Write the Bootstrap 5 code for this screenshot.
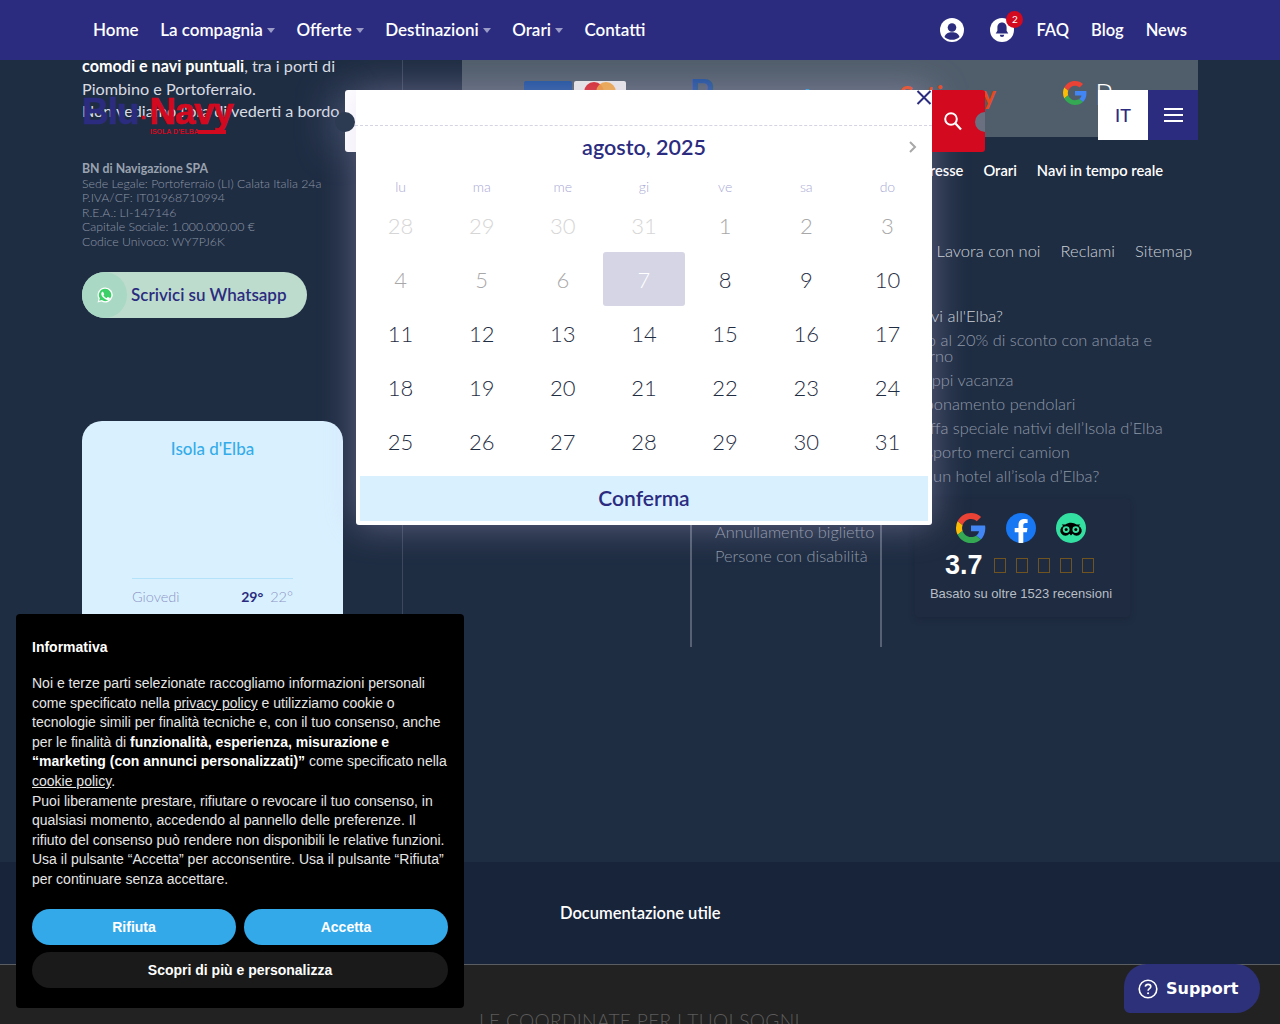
<!DOCTYPE html>
<html lang="it">
<head>
<meta charset="utf-8">
<title>Blu Navy</title>
<link href="https://cdn.jsdelivr.net/npm/bootstrap@5.3.0/dist/css/bootstrap.min.css" rel="stylesheet">
<style>
html,body{height:1024px;overflow:hidden}
body{background:#1f2d43;font-family:"Lato","Noto Sans",sans-serif;color:#fff;position:relative}
a{text-decoration:none;color:inherit}
.topnav{top:0;left:0;width:1280px;height:60px;background:#2b2c7f;padding:0 93px;z-index:20;font-size:16.5px;font-weight:600}
.topnav .gp{gap:22px}
.topnav .lgrp{font-size:17px;gap:21.5px}
.caret{display:inline-block;width:0;height:0;border:4.5px solid transparent;border-top:5px solid #9a9bc7;border-bottom:0;margin-left:4px;vertical-align:3px}
.iconbtn{width:24px;height:24px;display:block}
.bellwrap{position:relative;width:24px;height:24px;margin-left:4px}
.bellbadge{position:absolute;left:16px;top:-7px;width:17px;height:17px;border-radius:50%;background:#d2091f;font-size:10px;line-height:17px;text-align:center;color:#fff;font-weight:400}
.stage{padding:55px 82px 0;height:862px}
.leftcol{width:321px;height:752px;border-right:1px solid #3c495d;flex:none}
.intro{font-size:16.2px;line-height:22.5px;width:270px;font-weight:400;color:#d8dce2}
.intro b{color:#fff;font-weight:700}
.company{margin-top:39.5px;font-size:12.3px;line-height:14.5px;color:#8c96a4;font-weight:300}
.company b{font-weight:700;color:#9aa3af}
.wapill{margin-top:22.5px;width:225px;height:46px;background:#bedccd;border-radius:23px;color:#2b2c7f;font-size:17px;font-weight:600;gap:4px}
.wacirc{width:45px;height:46px;border-radius:23px;background:#a9d9c4;flex:none}
.wxcard{margin-top:103px;width:261px;height:300px;background:#d9f1ff;border-radius:20px 20px 0 0;padding:18px 50px 0;color:#8f93c4}
.wxcard h6{color:#35ace9;font-size:17px;font-weight:500;text-align:center;margin:0;line-height:20px;height:139px}
.wxrow{border-top:1px solid #b5e2fb;padding-top:8px;font-size:14.5px;font-weight:300;line-height:20px}
.wxrow b{color:#2b2c7f;font-weight:700;font-size:14px;margin-right:3px}
.rightcol{margin-left:59px;width:736px;flex:none}
.payband{height:82px;background:#505d6b;padding:26px 0 0 62px;gap:1px;overflow:hidden;align-items:flex-start}
.cardlogo{width:48px;height:30px;border-radius:2px;background:#1a4f9c;flex:none}
.mclogo{width:52px;background:#e8e8e8;margin-left:1px}
.ppal{margin-left:63px;color:#1d4f9a;font-size:26px;font-weight:700;line-height:28px;width:150px;font-family:"Liberation Sans",sans-serif;flex:none;white-space:nowrap}
.ppal b{font-size:36px;line-height:24px;margin-right:12px;vertical-align:top}
.ppal i{font-style:normal;vertical-align:top;line-height:28px;margin-top:4px;display:inline-block}
.ppal u{text-decoration:none;color:#2aa0dc}
.scala{margin-left:41px;color:#e8491d;font-size:26px;line-height:26px;font-weight:700;flex:none;width:114px;text-align:right;margin-top:1px}
.gpay{margin-left:66px;gap:8px;font-size:30px;font-weight:300;line-height:24px;color:#fff;flex:none}
.row2{gap:20px;justify-content:flex-end;padding-right:35px;margin-top:23px;font-size:14.7px;font-weight:600;line-height:20px}
.row3{gap:20px;justify-content:flex-end;padding-right:6px;margin-top:59px;font-size:16.5px;font-weight:300;line-height:24px;color:#ccd1d8}
.cols3{margin-top:27px;height:357px;display:grid;grid-template-columns:228px 190px 318px}
.colb{border-left:2px solid #566274;padding-left:22px}
.colb ul{font-size:16.4px;line-height:16px;font-weight:300;color:#8e98a6;margin:0;padding:0;list-style:none}
.colb li{margin-bottom:8px}
.c2{padding-top:234px;padding-left:23px}
.c3{padding-top:16px;padding-left:23px}
.c3 h6{font-size:16.5px;line-height:20px;font-weight:300;color:#ccd1d8;margin:0 0 6px}
.revbox{margin:15px 0 0 10px;width:215px;height:118px;background:#1e2b40;box-shadow:0 2px 6px rgba(15,22,35,.3);padding:14px 0 0;text-align:center;border-radius:3px}
.revicons{gap:20px;justify-content:center;padding-right:3px}
.revicons svg{width:30px;height:30px;display:block}
.revscore{font-family:"Liberation Sans",sans-serif;font-weight:700;font-size:27px;line-height:32px;gap:11px;padding-left:30px;margin-top:6px}
.tofu{display:inline-block;width:12px;height:15px;border:1px solid #6f5422;margin-right:10.2px}
.revtxt{font-family:"Liberation Sans",sans-serif;font-size:13px;line-height:16px;color:#b8bec6;margin-top:5px;padding-right:3px}
.docband{height:103px;background:#18243a;border-bottom:1px solid #5a5d62;font-size:16.5px;font-weight:600;padding-left:560px;line-height:102px}
.btmband{height:59px;background:#222;color:#5b5b5b;font-size:19.2px;font-weight:300;padding:44px 0 0 479px;line-height:24px;letter-spacing:.3px;overflow:hidden;white-space:nowrap}
.logo{left:82px;top:94px;width:160px;height:44px;z-index:6;font-family:"Liberation Sans",sans-serif;font-weight:700;line-height:36px;font-size:37px;-webkit-text-stroke:.6px currentColor}
.logo .bl{color:#2b2c7f;letter-spacing:-1px}
.logo .dt{color:#d2091f;font-size:20px;margin:0 2px}
.logo .nv{color:#d2091f;letter-spacing:-1.3px}
.logosub{left:68px;top:34px;font-size:7px;line-height:8px;color:#d2091f;-webkit-text-stroke:0;white-space:nowrap}
.logotail{left:116px;top:36px;width:28px;height:4px;background:#d2091f}
.corner{left:1098px;top:90px;z-index:12}
.ibox{width:50px;height:50px;background:#fff;color:#2b2c7f;font-size:18px;font-weight:500}
.mbox{width:50px;height:50px;background:#2b2c7f}
.mbox i{display:block;width:19px;height:2px;background:#fff;margin:2px 0}
.modalw{left:345px;top:90px;width:587px;height:435px;z-index:10}
.stub{left:0;top:0;width:12px;height:62px;background:#fff;border-radius:3px 0 0 3px;box-shadow:-12px 0 36px rgba(170,175,230,.38)}
.mbody{margin-left:11px;width:576px;height:435px;background:#fff;padding:41px 4px 4px;border-radius:0 0 3px 3px;box-shadow:0 0 36px rgba(205,190,235,.38);position:relative}
.notchl{left:-10px;top:22px;width:20px;height:20px;border-radius:50%;background:#2c3a52}
.dash{left:10px;right:0;top:35px;border-top:1px dashed #d4d4e2}
.xclose{right:0;top:0;width:16px;height:15px}
.mtitle{height:32px;line-height:32px;text-align:center;color:#2b2c7f;font-size:21.5px;font-weight:600;position:relative}
.chev{position:absolute;right:11px;top:9px;width:9px;height:14px}
.calgrid{display:grid;grid-template-columns:repeat(7,1fr);margin-top:11px;text-align:center}
.dname{height:24px;line-height:26px;font-size:14px;color:#a9a9d4;font-weight:300}
.dday{height:54px;line-height:55px;font-size:22px;font-weight:300;color:#1f2d43}
.dday.old{color:#d6d6d6}
.dday.dim{color:#a8a8a8}
.dday.sel{background:#d5d5e5;color:#fff;border-radius:3px}
.confirmb{margin-top:8px;height:45px;line-height:43px;background:#d9f1ff;color:#2b2c7f;font-size:21px;font-weight:600;text-align:center}
.srch{left:587px;top:0;width:53px;height:62px;background:#d2091f;border-radius:0 3px 3px 0;overflow:hidden}
.srch svg{position:absolute;left:11px;top:21px;width:20px;height:20px}
.notchr{left:43px;top:22px;width:20px;height:20px;border-radius:50%;background:#6b7080}
.cookiebox{left:16px;top:614px;width:448px;height:394px;background:#000;border-radius:4px;padding:24px 16px 0;z-index:15;font-family:"Liberation Sans",sans-serif;font-size:14px;line-height:19.6px;color:#e6e6e6}
.cookiebox h6{font-size:14px;line-height:19.6px;font-weight:700;color:#fff;margin:0 0 16.4px}
.cookiebox p{margin:0}
.cookiebox p b{color:#fff}
.cookiebox p a{text-decoration:underline}
.ckgrid{margin-top:19.6px;display:grid;grid-template-columns:1fr 1fr;gap:7px 8px}
.ckbtn{height:36px;padding:0;border:0;font-size:14px;font-weight:700;color:#fff;background:#33a9ea;border-radius:18px;line-height:36px;font-family:"Liberation Sans",sans-serif}
.ckbtn:hover{background:#33a9ea;color:#fff}
.ckalt{grid-column:1 / 3;background:#1a1a1a}
.ckalt:hover{background:#1a1a1a}
.supp{left:1124px;top:964px;width:136px;height:49px;background:#2d3179;border-radius:24px 26px 26px 6px;z-index:16;font-family:"DejaVu Sans",sans-serif;font-weight:700;font-size:16px;gap:8px;padding-left:14px}
.supp svg{width:20px;height:20px;flex:none}
</style>
</head>
<body>

<nav class="topnav position-fixed d-flex align-items-center justify-content-between">
  <div class="d-flex align-items-center lgrp">
    <a href="#">Home</a>
    <a href="#">La compagnia<span class="caret"></span></a>
    <a href="#">Offerte<span class="caret"></span></a>
    <a href="#">Destinazioni<span class="caret"></span></a>
    <a href="#">Orari<span class="caret"></span></a>
    <a href="#">Contatti</a>
  </div>
  <div class="d-flex align-items-center gp">
    <svg class="iconbtn" viewBox="0 0 24 24"><circle cx="12" cy="12" r="12" fill="#fff"/><circle cx="12" cy="9.500" r="4.300" fill="#2b2c7f"/><path d="M4.500 19c1-3.400 4-4.800 7.500-4.800s6.500 1.400 7.500 4.800c-2 1.900-4.600 2.800-7.500 2.800s-5.500-.9-7.500-2.800z" fill="#2b2c7f"/></svg>
    <div class="bellwrap">
      <svg class="iconbtn" viewBox="0 0 24 24"><circle cx="12" cy="12" r="12" fill="#fff"/><path d="M12 4.500c-3 0-4.600 2.300-4.600 5v3.200l-1.700 2.800h12.600l-1.700-2.800V9.500c0-2.700-1.600-5-4.600-5z" fill="#2b2c7f"/><path d="M9.800 16.800h4.400a2.200 2.200 0 0 1-4.400 0z" fill="#2b2c7f"/></svg>
      <span class="bellbadge">2</span>
    </div>
    <a href="#">FAQ</a>
    <a href="#">Blog</a>
    <a href="#">News</a>
  </div>
</nav>

<div class="stage d-flex">
  <div class="leftcol">
    <div class="intro"><b>comodi e navi puntuali</b>, tra i porti di Piombino e Portoferraio.<br>Non vediamo l'ora di vederti a bordo.</div>
    <div class="company"><b>BN di Navigazione SPA</b><br>Sede Legale: Portoferraio (LI) Calata Italia 24a<br>P.IVA/CF: IT01968710994<br>R.E.A.: LI-147146<br>Capitale Sociale: 1.000.000,00 €<br>Codice Univoco: WY7PJ6K</div>
    <a href="#" class="wapill d-flex align-items-center">
      <span class="wacirc d-flex align-items-center justify-content-center">
        <svg width="18" height="18" viewBox="0 0 24 24"><path d="M12 2a10 10 0 0 0-8.600 15L2 22l5.200-1.400A10 10 0 1 0 12 2z" fill="#fff"/><path d="M12 3.800a8.200 8.200 0 0 0-6.900 12.600l-.9 3.300 3.400-.9A8.200 8.200 0 1 0 12 3.800z" fill="#3dd068"/><path d="M9 7.500c-.3 0-.7.100-1 .5-.4.500-1 1.200-1 2.600s1 2.800 1.200 3c.1.200 2 3.100 4.900 4.300 2.400 1 2.900.8 3.400.7.500 0 1.700-.7 1.900-1.300.2-.7.200-1.200.2-1.300-.1-.1-.3-.2-.6-.4l-1.900-.9c-.3-.1-.5-.1-.7.100l-.9 1.100c-.1.200-.3.200-.6.100-.3-.2-1.200-.5-2.300-1.400-.8-.8-1.400-1.700-1.600-2-.1-.3 0-.4.100-.6l.7-.8c.1-.2.100-.4 0-.6L9.600 8c-.2-.5-.4-.5-.6-.5z" fill="#fff"/></svg>
      </span>
      <span>Scrivici su Whatsapp</span>
    </a>
    <div class="wxcard">
      <h6>Isola d'Elba</h6>
      <div class="wxrow d-flex justify-content-between"><span>Giovedì</span><span><b>29°</b> 22°</span></div>
    </div>
  </div>

  <div class="rightcol">
    <div class="payband d-flex">
      <div class="cardlogo"></div>
      <div class="cardlogo mclogo d-flex justify-content-center">
        <svg width="36" height="22" viewBox="0 0 36 22"><circle cx="12" cy="11" r="10" fill="#d8232a"/><circle cx="24" cy="11" r="10" fill="#ef9f32" fill-opacity=".9"/></svg>
      </div>
      <div class="ppal"><b>P</b><i>Pay<u>Pal</u></i></div>
      <div class="scala">Satispay</div>
      <div class="gpay d-flex align-items-start">
        <svg width="24" height="24" viewBox="0 0 48 48"><path fill="#EA4335" d="M24 9.500c3.500 0 6.700 1.200 9.200 3.600l6.900-6.900C35.900 2.400 30.500 0 24 0 14.600 0 6.500 5.400 2.600 13.200l8 6.200C12.400 13.700 17.700 9.500 24 9.500z"/><path fill="#4285F4" d="M46.900 24.500c0-1.600-.1-3.100-.4-4.500H24v9h12.900c-.6 3-2.200 5.500-4.700 7.200l7.700 6c4.500-4.200 7-10.300 7-17.700z"/><path fill="#FBBC05" d="M10.500 28.600A14.500 14.500 0 0 1 9.700 24c0-1.600.3-3.200.8-4.600l-8-6.200A24 24 0 0 0 0 24c0 3.900.9 7.500 2.600 10.800l7.900-6.200z"/><path fill="#34A853" d="M24 48c6.500 0 11.900-2.100 15.900-5.800l-7.700-6c-2.200 1.400-4.900 2.300-8.200 2.300-6.300 0-11.600-4.200-13.500-10l-7.900 6.200C6.500 42.600 14.600 48 24 48z"/></svg>
        <span>Pay</span>
      </div>
    </div>
    <div class="row2 d-flex"><a href="#">Punti d'interesse</a><a href="#">Orari</a><a href="#">Navi in tempo reale</a></div>
    <div class="row3 d-flex"><a href="#">Lavora con noi</a><a href="#">Reclami</a><a href="#">Sitemap</a></div>
    <div class="cols3">
      <div></div>
      <div class="colb c2">
        <ul><li>Annullamento biglietto</li><li>Persone con disabilità</li></ul>
      </div>
      <div class="colb c3">
        <h6>Arrivi all'Elba?</h6>
        <ul>
          <li>Fino al 20% di sconto con andata e<br>ritorno</li>
          <li>Gruppi vacanza</li>
          <li>Abbonamento pendolari</li>
          <li>Tariffa speciale nativi dell’Isola d’Elba</li>
          <li>Trasporto merci camion</li>
          <li>Hai un hotel all’isola d’Elba?</li>
        </ul>
        <div class="revbox">
          <div class="revicons d-flex">
            <svg viewBox="0 0 48 48"><path fill="#EA4335" d="M24 9.500c3.500 0 6.700 1.200 9.200 3.600l6.900-6.900C35.900 2.400 30.500 0 24 0 14.600 0 6.500 5.400 2.600 13.200l8 6.200C12.400 13.700 17.700 9.500 24 9.500z"/><path fill="#4285F4" d="M46.900 24.500c0-1.600-.1-3.100-.4-4.500H24v9h12.900c-.6 3-2.200 5.500-4.700 7.200l7.700 6c4.500-4.200 7-10.300 7-17.700z"/><path fill="#FBBC05" d="M10.500 28.600A14.500 14.500 0 0 1 9.700 24c0-1.600.3-3.200.8-4.600l-8-6.200A24 24 0 0 0 0 24c0 3.900.9 7.500 2.600 10.800l7.900-6.200z"/><path fill="#34A853" d="M24 48c6.500 0 11.900-2.100 15.900-5.800l-7.700-6c-2.200 1.400-4.900 2.300-8.200 2.300-6.300 0-11.600-4.200-13.500-10l-7.900 6.200C6.500 42.600 14.600 48 24 48z"/></svg>
            <svg viewBox="0 0 30 30"><circle cx="15" cy="15" r="15" fill="#1877f2"/><path d="M20.800 19.300l.7-4.300h-4.200v-2.800c0-1.200.6-2.300 2.400-2.300h1.900V6.200s-1.700-.3-3.400-.3c-3.400 0-5.700 2.100-5.700 5.800V15H8.700v4.300h3.800v10.500a15 15 0 0 0 4.800 0V19.300z" fill="#fff"/></svg>
            <svg viewBox="0 0 30 30"><circle cx="15" cy="15" r="15" fill="#34e0a1"/><path d="M15 9.800c-2 0-4 .5-5.700 1.600H5.700l1.400 1.600a5.100 5.100 0 1 0 6.300 7.700l1.600 1.800 1.600-1.800a5.100 5.100 0 1 0 6.300-7.700l1.400-1.600h-3.600A10.700 10.700 0 0 0 15 9.800z" fill="#000"/><circle cx="10.200" cy="16.600" r="3.400" fill="#34e0a1"/><circle cx="19.800" cy="16.600" r="3.400" fill="#34e0a1"/><circle cx="10.200" cy="16.600" r="1.500" fill="#000"/><circle cx="19.800" cy="16.600" r="1.500" fill="#000"/></svg>
          </div>
          <div class="revscore d-flex align-items-center"><span>3.7</span><span class="d-flex"><i class="tofu"></i><i class="tofu"></i><i class="tofu"></i><i class="tofu"></i><i class="tofu"></i></span></div>
          <div class="revtxt">Basato su oltre 1523 recensioni</div>
        </div>
      </div>
    </div>
  </div>
</div>
<div class="docband">Documentazione utile</div>
<div class="btmband">LE COORDINATE PER I TUOI SOGNI</div>

<div class="logo position-absolute">
  <span class="bl">Blu</span><span class="dt">·</span><span class="nv">Navy</span>
  <span class="logosub position-absolute">ISOLA D'ELBA</span>
  <span class="logotail position-absolute"></span>
</div>

<div class="corner position-absolute d-flex">
  <div class="ibox d-flex align-items-center justify-content-center">IT</div>
  <div class="mbox d-flex flex-column align-items-center justify-content-center"><i></i><i></i><i></i></div>
</div>

<div class="modalw position-absolute">
  <div class="stub position-absolute"></div>
  <div class="mbody">
    <div class="mtitle">agosto, 2025
      <svg class="chev" viewBox="0 0 9 14"><path d="M2 2l5 5-5 5" fill="none" stroke="#a8a8a8" stroke-width="2"/></svg>
    </div>
    <div class="calgrid">
      <div class="dname">lu</div><div class="dname">ma</div><div class="dname">me</div><div class="dname">gi</div><div class="dname">ve</div><div class="dname">sa</div><div class="dname">do</div>
      <div class="dday old">28</div><div class="dday old">29</div><div class="dday old">30</div><div class="dday old">31</div><div class="dday dim">1</div><div class="dday dim">2</div><div class="dday dim">3</div>
      <div class="dday dim">4</div><div class="dday dim">5</div><div class="dday dim">6</div><div class="dday sel">7</div><div class="dday">8</div><div class="dday">9</div><div class="dday">10</div>
      <div class="dday">11</div><div class="dday">12</div><div class="dday">13</div><div class="dday">14</div><div class="dday">15</div><div class="dday">16</div><div class="dday">17</div>
      <div class="dday">18</div><div class="dday">19</div><div class="dday">20</div><div class="dday">21</div><div class="dday">22</div><div class="dday">23</div><div class="dday">24</div>
      <div class="dday">25</div><div class="dday">26</div><div class="dday">27</div><div class="dday">28</div><div class="dday">29</div><div class="dday">30</div><div class="dday">31</div>
    </div>
    <div class="confirmb">Conferma</div>
  </div>
  <div class="dash position-absolute"></div>
  <div class="notchl position-absolute"></div>
  <svg class="xclose position-absolute" viewBox="0 0 16 15"><path d="M1.500 1l13 13M14.500 1l-13 13" stroke="#2b2c7f" stroke-width="2" fill="none"/></svg>
  <div class="srch position-absolute">
    <svg viewBox="0 0 20 20"><circle cx="8" cy="8" r="5.800" fill="none" stroke="#fff" stroke-width="2"/><path d="M12.500 12.500l5.500 6" stroke="#fff" stroke-width="2.200"/></svg>
    <div class="notchr position-absolute"></div>
  </div>
</div>

<div class="cookiebox position-absolute">
  <h6>Informativa</h6>
  <p>Noi e terze parti selezionate raccogliamo informazioni personali come specificato nella <a href="#">privacy policy</a> e utilizziamo cookie o tecnologie simili per finalità tecniche e, con il tuo consenso, anche per le finalità di <b>funzionalità, esperienza, misurazione e “marketing (con annunci personalizzati)”</b> come specificato nella <a href="#">cookie policy</a>.<br>Puoi liberamente prestare, rifiutare o revocare il tuo consenso, in qualsiasi momento, accedendo al pannello delle preferenze. Il rifiuto del consenso può rendere non disponibili le relative funzioni.<br>Usa il pulsante “Accetta” per acconsentire. Usa il pulsante “Rifiuta” per continuare senza accettare.</p>
  <div class="ckgrid">
    <button type="button" class="btn ckbtn">Rifiuta</button>
    <button type="button" class="btn ckbtn">Accetta</button>
    <button type="button" class="btn ckbtn ckalt">Scopri di più e personalizza</button>
  </div>
</div>

<div class="supp position-absolute d-flex align-items-center">
  <svg viewBox="0 0 20 20"><circle cx="10" cy="10" r="8.800" fill="none" stroke="#fff" stroke-width="1.600"/><path d="M7.300 7.700c.2-1.500 1.300-2.300 2.800-2.300 1.600 0 2.700 1 2.700 2.300 0 1.900-2.700 2-2.700 4" fill="none" stroke="#fff" stroke-width="1.600"/><circle cx="10.100" cy="14.300" r="1.050" fill="#fff"/></svg>
  <span>Support</span>
</div>

<script src="https://cdn.jsdelivr.net/npm/bootstrap@5.3.0/dist/js/bootstrap.bundle.min.js"></script>
</body>
</html>
